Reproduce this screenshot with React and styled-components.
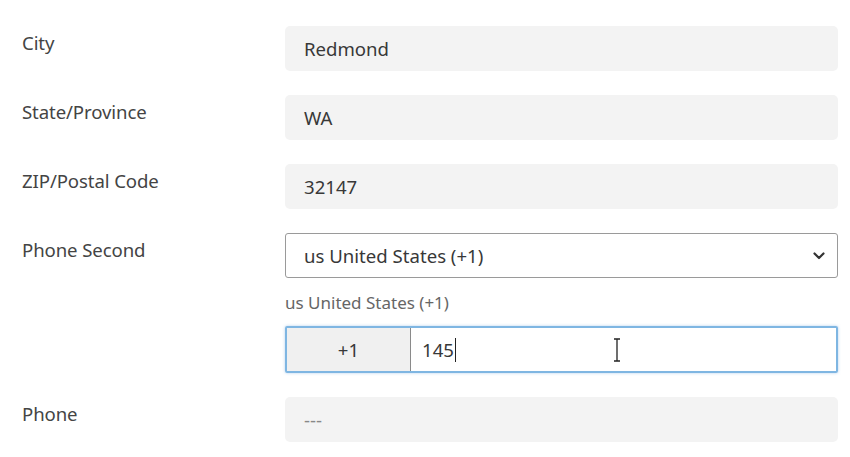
import React from "react";
import styled, { createGlobalStyle } from "styled-components";

const Global = createGlobalStyle`
  html, body { margin: 0; padding: 0; background: #fff; }
  body { font-family: "Noto Sans", "Open Sans", sans-serif; }
`;

const Form = styled.div`
  display: flex;
  flex-direction: column;
  padding: 26px 12px 0 22px;
  gap: 24px;
  width: 816px;
`;

const Row = styled.div`
  display: grid;
  grid-template-columns: 263px 553px;
  align-items: start;
`;

const Label = styled.div`
  font-size: 18.6px;
  color: #444;
  line-height: 24px;
  padding-top: 5px;
  letter-spacing: -0.1px;
`;

const Field = styled.div`
  display: flex;
  flex-direction: column;
`;

const ReadOnly = styled.div`
  height: 45px;
  box-sizing: border-box;
  background: #f3f3f3;
  border-radius: 5px;
  padding: 0 19px;
  display: flex;
  align-items: center;
  font-size: 18.6px;
  color: ${(p) => (p.$muted ? "#888" : "#383838")};
`;

const Select = styled.div`
  height: 45px;
  box-sizing: border-box;
  border: 1px solid #9a9a9a;
  border-radius: 3px;
  background: #fff;
  padding: 0 12px 0 18px;
  display: flex;
  align-items: center;
  justify-content: space-between;
  font-size: 18.6px;
  color: #383838;
`;

const Hint = styled.div`
  font-size: 17px;
  color: #666;
  margin-top: 14px;
  line-height: 22px;
`;

const PhoneGroup = styled.div`
  margin-top: 12px;
  height: 47px;
  box-sizing: border-box;
  border: 2px solid #7fb6e2;
  border-radius: 2px;
  box-shadow: 0 0 3px rgba(100, 160, 220, 0.5);
  display: flex;
  overflow: hidden;
`;

const Prefix = styled.div`
  width: 123px;
  background: #f0f0f0;
  border-right: 1px solid #8a8a8a;
  display: flex;
  align-items: center;
  justify-content: center;
  font-size: 18.6px;
  color: #383838;
`;

const PhoneInput = styled.div`
  flex: 1;
  position: relative;
  display: flex;
  align-items: center;
  padding-left: 11px;
  font-size: 18.6px;
  color: #383838;
`;

const Caret = styled.span`
  display: inline-block;
  width: 1px;
  height: 24px;
  background: #222;
  margin-left: 1px;
`;

const IBeam = styled.svg`
  position: absolute;
  left: 202px;
  top: 10px;
`;

const Chevron = () => (
  <svg width="12" height="8" viewBox="0 0 12 8">
    <path d="M1.5 1.5 L6 6 L10.5 1.5" fill="none" stroke="#333" strokeWidth="2.2" strokeLinecap="round" strokeLinejoin="round" />
  </svg>
);

export default function App() {
  return (
    <>
      <Global />
      <Form>
        <Row>
          <Label>City</Label>
          <ReadOnly>Redmond</ReadOnly>
        </Row>
        <Row>
          <Label>State/Province</Label>
          <ReadOnly>WA</ReadOnly>
        </Row>
        <Row>
          <Label>ZIP/Postal Code</Label>
          <ReadOnly>32147</ReadOnly>
        </Row>
        <Row>
          <Label>Phone Second</Label>
          <Field>
            <Select>
              <span>us United States (+1)</span>
              <Chevron />
            </Select>
            <Hint>us United States (+1)</Hint>
            <PhoneGroup>
              <Prefix>+1</Prefix>
              <PhoneInput>
                145<Caret />
                <IBeam width="8" height="24" viewBox="0 0 8 24">
                  <path d="M1 1 H4 V23 H1 M4 1 H7 M4 23 H7" fill="none" stroke="#222" strokeWidth="1.3" />
                </IBeam>
              </PhoneInput>
            </PhoneGroup>
          </Field>
        </Row>
        <Row>
          <Label>Phone</Label>
          <ReadOnly $muted>---</ReadOnly>
        </Row>
      </Form>
    </>
  );
}
